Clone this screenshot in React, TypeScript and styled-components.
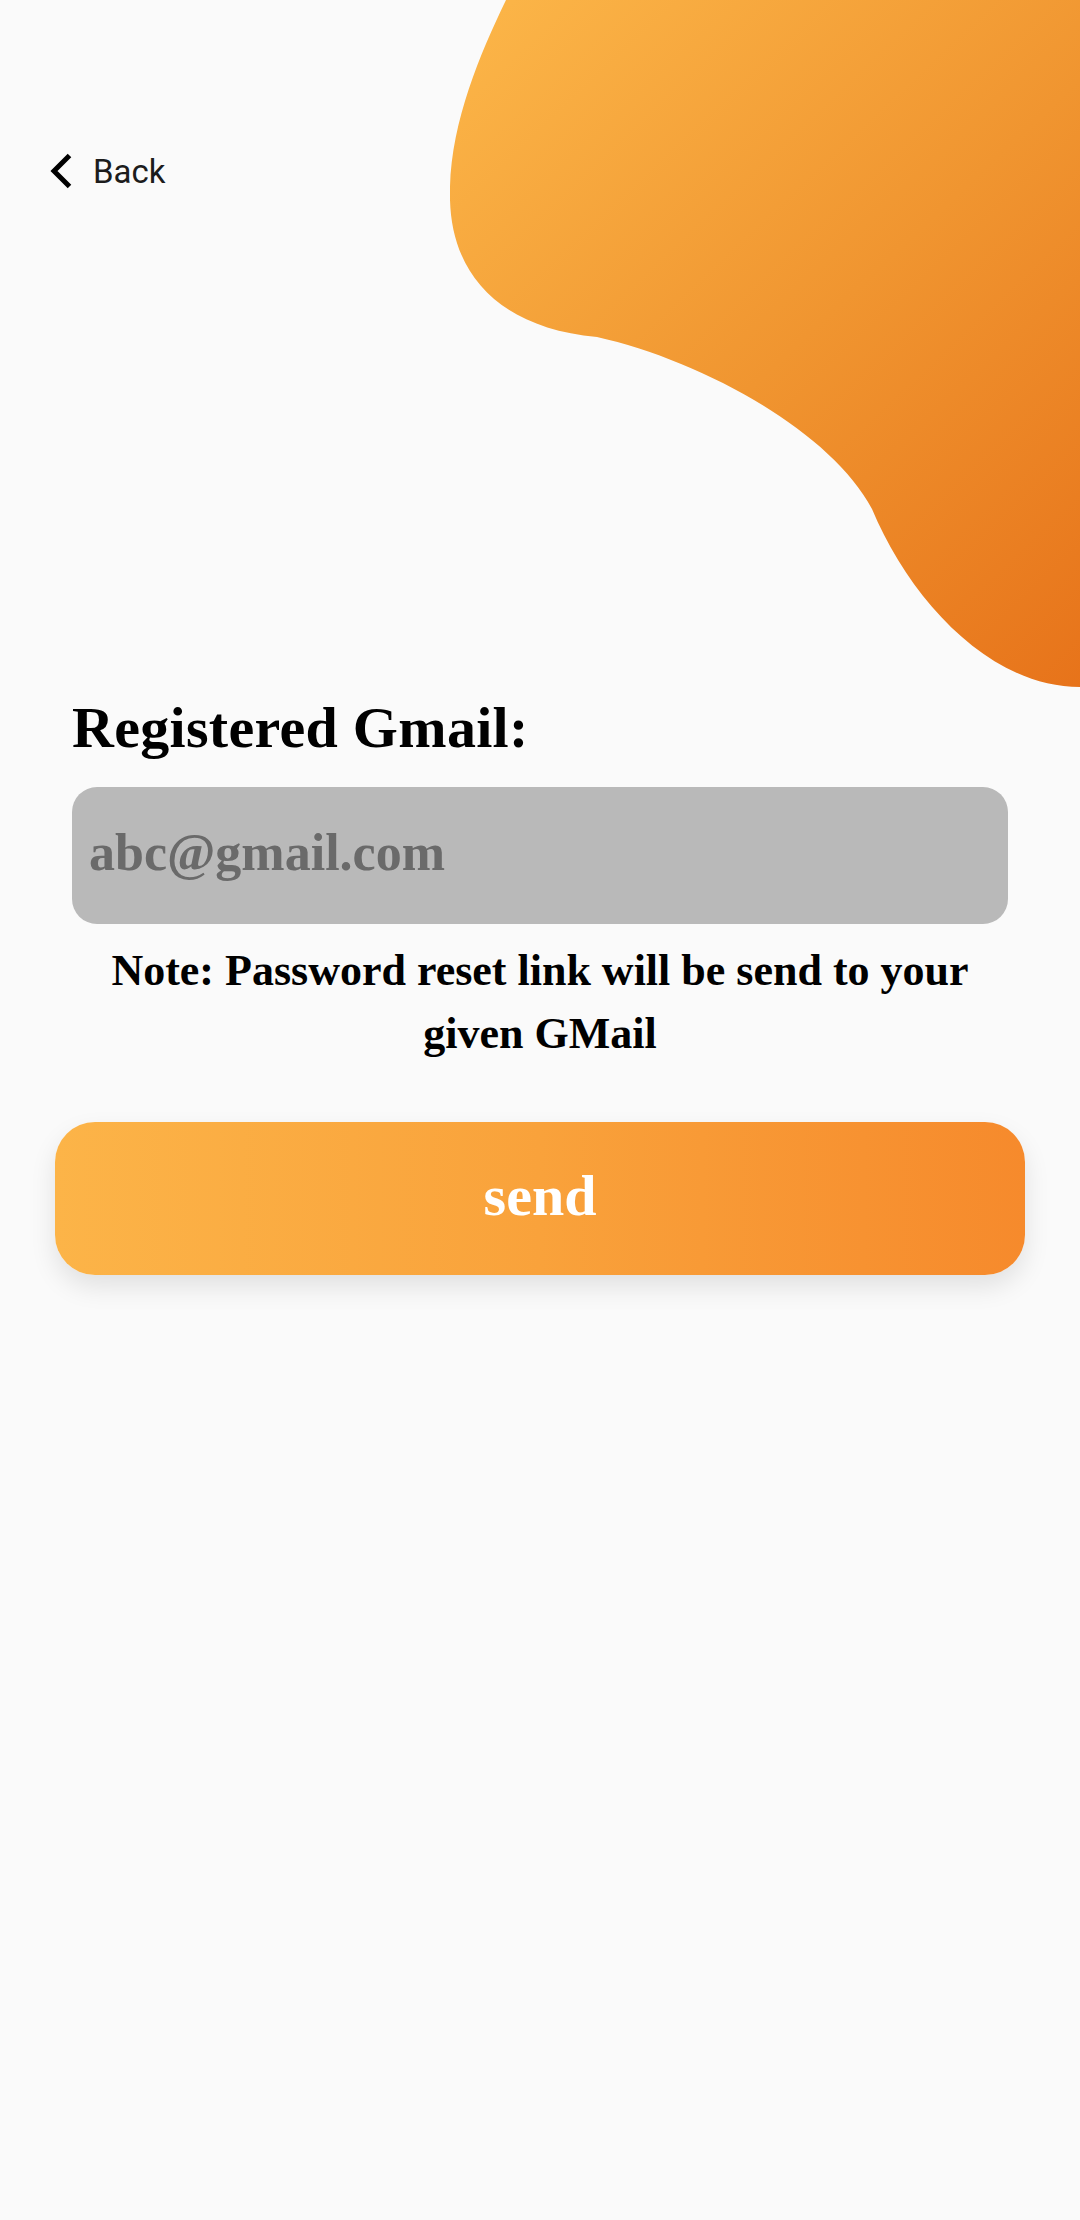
import React from "react";
import styled, { createGlobalStyle } from "styled-components";

const GlobalStyle = createGlobalStyle`
  html, body {
    margin: 0;
    padding: 0;
    background: #fafafa;
  }
  * {
    box-sizing: border-box;
  }
`;

const Page = styled.div`
  position: relative;
  width: 1080px;
  min-height: 2220px;
  background: #fafafa;
  overflow: hidden;
`;

const Blob = styled.svg`
  position: absolute;
  top: 0;
  right: 0;
  width: 630px;
  height: 700px;
`;

const Header = styled.header`
  position: relative;
  padding: 150px 0 0 50px;
`;

const BackButton = styled.button`
  display: flex;
  align-items: center;
  gap: 21px;
  height: 42px;
  padding: 0;
  border: none;
  background: none;
  font-family: Roboto, "Liberation Sans", sans-serif;
  font-size: 33px;
  font-weight: 400;
  color: #1c1c1c;
  cursor: pointer;
`;

const Form = styled.main`
  position: relative;
  display: flex;
  flex-direction: column;
  padding: 504px 72px 0;
  font-family: "Liberation Serif", "DejaVu Serif", serif;
`;

const Label = styled.h1`
  margin: 0;
  font-size: 58px;
  line-height: 63px;
  font-weight: 700;
  letter-spacing: 0.3px;
  color: #000;
`;

const EmailInput = styled.input`
  margin-top: 28px;
  width: 100%;
  height: 137px;
  padding: 0 17px 6px;
  border: none;
  border-radius: 25px;
  background: #b9b9b9;
  font-family: "Liberation Serif", "DejaVu Serif", serif;
  font-size: 52px;
  font-weight: 700;
  color: #000;
  outline: none;
  &::placeholder {
    color: #6a6a6a;
    opacity: 1;
  }
`;

const Note = styled.p`
  margin: 15px 0 0;
  text-align: center;
  font-size: 44px;
  line-height: 63px;
  font-weight: 700;
  color: #000;
`;

const SendButton = styled.button`
  margin: 57px -17px 0;
  height: 153px;
  padding: 0 0 6px;
  border: none;
  border-radius: 40px;
  background: linear-gradient(90deg, #fcb448 0%, #f9a23b 50%, #f68a2c 100%);
  box-shadow: 0 12px 26px rgba(0, 0, 0, 0.1);
  font-family: "Liberation Serif", "DejaVu Serif", serif;
  font-size: 58px;
  font-weight: 700;
  color: #fff;
  cursor: pointer;
`;

const ChevronLeft = () => (
  <svg width="22" height="36" viewBox="0 0 22 36" aria-hidden="true">
    <polyline
      points="19.5,2.5 4,18 19.5,33.5"
      fill="none"
      stroke="#000"
      strokeWidth="5"
      strokeLinejoin="miter"
    />
  </svg>
);

export default function App() {
  return (
    <>
      <GlobalStyle />
      <Page>
        <Blob viewBox="450 0 630 700" aria-hidden="true">
          <defs>
            <linearGradient
              id="blobGrad"
              gradientUnits="userSpaceOnUse"
              x1="470"
              y1="40"
              x2="1080"
              y2="690"
            >
              <stop offset="0" stopColor="#fbb447" />
              <stop offset="0.5" stopColor="#f09530" />
              <stop offset="1" stopColor="#e7731a" />
            </linearGradient>
          </defs>
          <path
            d="M 506 0 C 478 58, 448 130, 450 200 C 452 275, 500 328, 597 337 C 700 360, 830 430, 872 509 C 910 600, 990 687, 1080 687 L 1080 0 Z"
            fill="url(#blobGrad)"
          />
        </Blob>
        <Header>
          <BackButton type="button">
            <ChevronLeft />
            Back
          </BackButton>
        </Header>
        <Form>
          <Label>Registered Gmail:</Label>
          <EmailInput type="email" placeholder="abc@gmail.com" />
          <Note>Note: Password reset link will be send to your given GMail</Note>
          <SendButton type="button">send</SendButton>
        </Form>
      </Page>
    </>
  );
}
